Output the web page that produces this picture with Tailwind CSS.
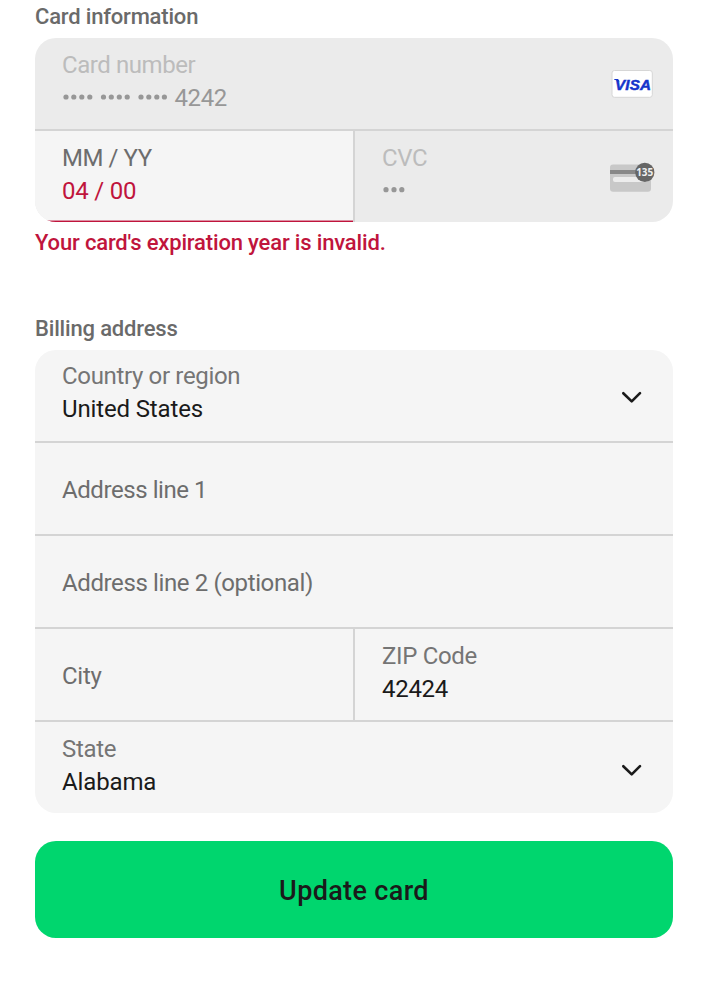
<!DOCTYPE html>
<html lang="en">
<head>
<meta charset="utf-8">
<title>Update card</title>
<script src="https://cdn.jsdelivr.net/npm/@tailwindcss/browser@4"></script>
</head>
<body class="h-[1000px] overflow-hidden bg-white px-[35px] font-['Roboto',sans-serif] text-[24px] leading-[33px] text-[#1a1a1a]">
<h2 class="h-[38px] pt-px text-[22px] leading-[32px] font-medium tracking-[-0.19px] text-[#6a6a6a]">Card information</h2>

<section class="h-[184px] overflow-hidden rounded-[21px] bg-[#ebebeb]">
  <div class="flex h-[93px] items-start justify-between border-b-2 border-[#d4d4d4] pt-[11px] pr-[20px] pl-[27px]">
    <div>
      <div class="tracking-[-0.43px] text-[#bcbcbc]">Card number</div>
      <div class="flex items-center gap-[7.5px] text-[#979797]">
        <svg class="mb-[4px] h-[6px] w-[105px]" viewBox="0 0 105 6" fill="#979797"><circle cx="4" cy="3" r="2.6"/><circle cx="11.8" cy="3" r="2.6"/><circle cx="19.8" cy="3" r="2.6"/><circle cx="27.8" cy="3" r="2.6"/><circle cx="41.5" cy="3" r="2.6"/><circle cx="49.3" cy="3" r="2.6"/><circle cx="57.3" cy="3" r="2.6"/><circle cx="65.2" cy="3" r="2.6"/><circle cx="79" cy="3" r="2.6"/><circle cx="86.8" cy="3" r="2.6"/><circle cx="94.8" cy="3" r="2.6"/><circle cx="102.4" cy="3" r="2.6"/></svg>
        <span class="tracking-[-0.4px]">4242</span>
      </div>
    </div>
    <svg class="mt-[21px] h-[28px] w-[42px]" viewBox="0 0 42 28">
      <rect x="1" y=".5" width="40.3" height="26.8" rx="2.5" fill="#fff" stroke="#d6d6d6"/>
      <text x="4" y="19.9" textLength="36" lengthAdjust="spacing" font-family="Liberation Sans" font-size="15.2" font-weight="700" font-style="italic" fill="#1434cb" stroke="#1434cb" stroke-width=".5">VISA</text>
      <path d="M3 9h4l1.5 3Q6 10 3 9.5z" fill="#1434cb"/>
    </svg>
  </div>
  <div class="flex h-[91px]">
    <div class="h-[91px] w-[320px] border-r-2 border-[#d4d4d4] bg-[#f5f5f5]">
      <div class="h-[91px] border-b border-[#c0143c]">
        <div class="h-[90px] border-b border-[#dc8fa2] pt-[11px] pl-[27px]">
          <div class="tracking-[-0.45px] text-[#6d6d6d]">MM / YY</div>
          <div class="tracking-[-0.2px] text-[#c0143c]">04 / 00</div>
        </div>
      </div>
    </div>
    <div class="flex flex-1 justify-between pt-[11px] pr-[18px] pl-[27px]">
      <div>
        <div class="tracking-[-0.4px] text-[#bcbcbc]">CVC</div>
        <svg class="mt-[12px] h-[6px] w-[24px]" viewBox="0 0 24 6" fill="#979797"><circle cx="4" cy="2.7" r="2.6"/><circle cx="12" cy="2.7" r="2.6"/><circle cx="19.8" cy="2.7" r="2.6"/></svg>
      </div>
      <svg class="mt-[20px] h-[30px] w-[45px]" viewBox="0 0 45 30">
        <rect y="2.4" width="41" height="27.4" rx="3" fill="#c8c8c8"/>
        <rect y="8" width="41" height="4" fill="#888"/>
        <rect x="3" y="15" width="35" height="5" rx="2" fill="#ececec"/>
        <circle cx="34.8" cy="10.4" r="9.6" fill="#666"/>
        <text x="26.2" y="14.3" textLength="17" lengthAdjust="spacingAndGlyphs" font-family="Open Sans" font-size="11" font-weight="700" fill="#f0f0f0">135</text>
      </svg>
    </div>
  </div>
</section>
<p class="h-[88px] pt-[5px] text-[22px] leading-[32px] font-medium tracking-[-0.16px] text-[#c0143c]">Your card's expiration year is invalid.</p>

<h2 class="h-[40px] pt-[3px] text-[22px] leading-[32px] font-medium tracking-[-0.17px] text-[#6a6a6a]">Billing address</h2>
<section class="h-[463px] overflow-hidden rounded-[21px] bg-[#f5f5f5]">
  <div class="flex h-[93px] items-start justify-between border-b-2 border-[#d4d4d4] pt-[10px] pr-[31px] pl-[27px]">
    <div><div class="tracking-[-0.34px] text-[#757575]">Country or region</div><div class="tracking-[-0.14px]">United States</div></div>
    <svg class="mt-[30px] h-[14px] w-[22px]" viewBox="0 0 22 14" fill="none" stroke="#1a1a1a" stroke-width="2.6" stroke-linecap="round" stroke-linejoin="round"><path d="M3.3 3.2l8.4 8.2L20 3.2"/></svg>
  </div>
  <div class="flex h-[93px] items-center border-b-2 border-[#d4d4d4] pt-[3px] pl-[27px] tracking-[-0.43px] text-[#6d6d6d]">Address line 1</div>
  <div class="flex h-[93px] items-center border-b-2 border-[#d4d4d4] pt-[3px] pl-[27px] tracking-[-0.38px] text-[#6d6d6d]">Address line 2 (optional)</div>
  <div class="flex h-[93px] border-b-2 border-[#d4d4d4]">
    <div class="flex w-[320px] items-center border-r-2 border-[#d4d4d4] pt-[4px] pl-[27px] tracking-[-0.25px] text-[#6d6d6d]">City</div>
    <div class="pt-[11px] pl-[27px]"><div class="tracking-[-0.34px] text-[#757575]">ZIP Code</div><div class="tracking-[-0.3px]">42424</div></div>
  </div>
  <div class="flex items-start justify-between pt-[11px] pr-[31px] pl-[27px]">
    <div><div class="tracking-[-0.34px] text-[#757575]">State</div><div class="tracking-[-0.14px]">Alabama</div></div>
    <svg class="mt-[30px] h-[14px] w-[22px]" viewBox="0 0 22 14" fill="none" stroke="#1a1a1a" stroke-width="2.6" stroke-linecap="round" stroke-linejoin="round"><path d="M3.3 3.2l8.4 8.2L20 3.2"/></svg>
  </div>
</section>

<button class="mt-[28px] block h-[97px] w-full rounded-[21px] bg-[#00d66e] pt-[4px] text-[27px] font-medium tracking-[0.35px]">Update card</button>
</body>
</html>
